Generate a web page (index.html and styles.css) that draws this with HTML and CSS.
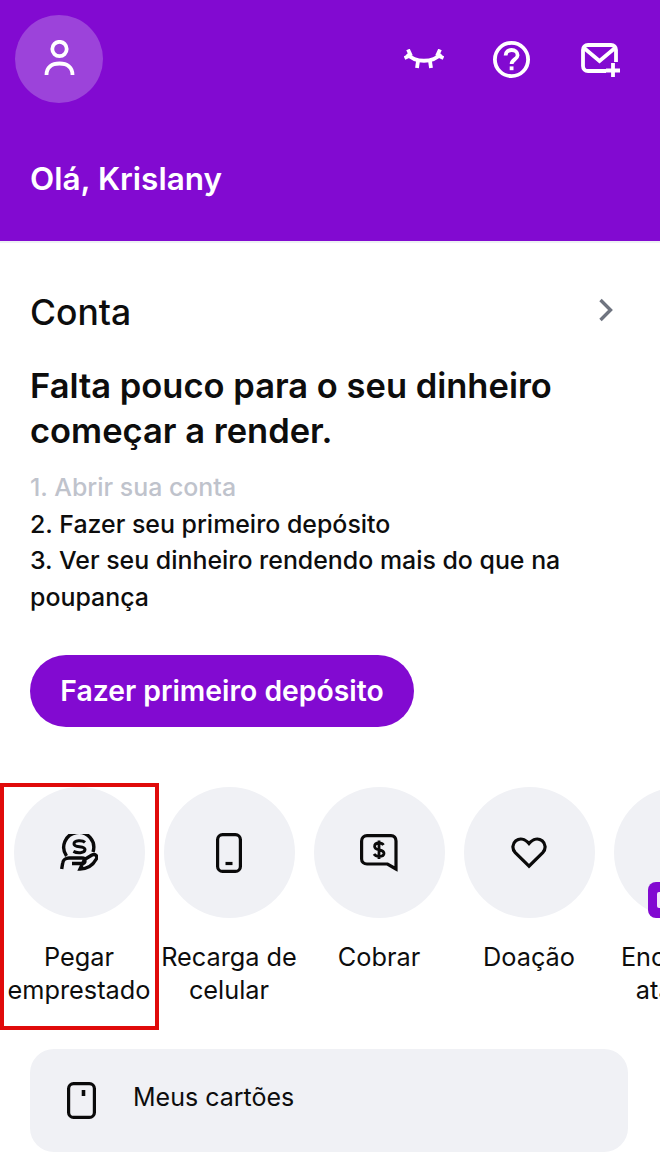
FILE: index.html
```html
<!DOCTYPE html>
<html lang="pt-BR">
    <head>
        <meta charset="UTF-8">
        <title>Conta</title>
        <link rel="stylesheet" href="styles.css">
    </head>
    <body>
        <header class="header">
            <div class="header-top">
                <div class="avatar">
                    <svg class="icon-person" width="31" height="36" viewBox="0 0 31 36" fill="none" stroke="#fff" stroke-width="3.8">
                        <circle cx="15.5" cy="9" r="7.2"/>
                        <path d="M2.5 35 C2.5 27 8 23.5 15.5 23.5 C23 23.5 28.5 27 28.5 35"/>
                    </svg>
                </div>
                <div class="header-icons">
                    <svg class="icon-eye" width="40" height="20" viewBox="0 0 40 20" fill="none" stroke="#fff" stroke-width="3.8">
                        <path d="M3 5 C11 14 29 14 37 5"/>
                        <path d="M4 0.5 L7 7"/>
                        <path d="M36 0.5 L33 7"/>
                        <path d="M0.5 9 L6 6.5"/>
                        <path d="M39.5 9 L34 6.5"/>
                        <path d="M14 12 L13 19"/>
                        <path d="M26 12 L27 19"/>
                    </svg>
                    <svg class="icon-help" width="37" height="37" viewBox="0 0 37 37" fill="none" stroke="#fff" stroke-width="3.8">
                        <circle cx="18.5" cy="18.5" r="16.6"/>
                        <path d="M12.6 14.6 C12.6 10.6 15.6 9 18.6 9 C22 9 24.6 11 24.6 14.2 C24.6 18.2 18.6 18.6 18.6 23"/>
                        <path d="M18.6 25.4 L18.6 29.2"/>
                    </svg>
                    <svg class="icon-mail" width="39" height="34" viewBox="0 0 39 34" fill="none" stroke="#fff" stroke-width="3.8">
                        <path d="M25 28 L7 28 C4 28 2 26 2 23 L2 7 C2 4 4 2 7 2 L30 2 C33 2 35 4 35 7 L35 19"/>
                        <path d="M3 5 L18.5 18 L34 5"/>
                        <path d="M32 20 L32 34 M25 27.5 L39 27.5"/>
                    </svg>
                </div>
            </div>
            <p class="greeting">Olá, Krislany</p>
        </header>
        <main class="account">
            <div class="account-title">
                <h1>Conta</h1>
                <svg width="16" height="24" viewBox="0 0 16 24" fill="none" stroke="#6f7480" stroke-width="3.4">
                    <path d="M2.5 2 L12.5 12 L2.5 22"/>
                </svg>
            </div>
            <h2 class="account-headline">Falta pouco para o seu dinheiro começar a render.</h2>
            <ol class="steps">
                <li class="step-done">1. Abrir sua conta</li>
                <li>2. Fazer seu primeiro depósito</li>
                <li>3. Ver seu dinheiro rendendo mais do que na poupança</li>
            </ol>
            <button class="deposit-button">Fazer primeiro depósito</button>
        </main>
        <section class="shortcuts">
            <div class="shortcut shortcut-marked">
                <div class="shortcut-circle">
                    <svg width="38" height="37" viewBox="0 0 38 37" fill="none" stroke="#0a0a0a" stroke-width="3.4">
                        <path d="M6.5 22 A15 15 0 1 1 33 18"/>
                        <path d="M25 8.4 C22.5 6 14 5.8 14 10 C14 14.2 25 11.4 25 15.6 C25 19.4 17 19.4 13.4 17.4" stroke-width="3"/>
                        <path d="M1.7 35 L2.7 29 C3 26 6 24 9 24 L22 24 C26 24 26 29.5 22 29.5 L12 29.5 M24.5 25.5 L32 21 C35 19.5 38 22 36.3 25 C33 31 27 35 20 35 Z"/>
                    </svg>
                </div>
                <span class="shortcut-label">Pegar emprestado</span>
            </div>
            <div class="shortcut">
                <div class="shortcut-circle">
                    <svg width="26" height="40" viewBox="0 0 26 40" fill="none" stroke="#0a0a0a" stroke-width="3.2">
                        <rect x="1.6" y="1.6" width="22.8" height="36.8" rx="5"/>
                        <path d="M9.5 30.5 L16.5 30.5"/>
                    </svg>
                </div>
                <span class="shortcut-label">Recarga de celular</span>
            </div>
            <div class="shortcut">
                <div class="shortcut-circle">
                    <svg width="38" height="38" viewBox="0 0 38 38" fill="none" stroke="#0a0a0a" stroke-width="3.2">
                        <path d="M36 35 L27.5 30 L7 30 C4 30 1.6 28 1.6 25 L1.6 7 C1.6 4 4 1.6 7 1.6 L31 1.6 C34 1.6 36 4 36 7 Z"/>
                        <path d="M23.5 11 C22.6 9.6 21 9 19 9 C16.4 9 14.6 10.2 14.6 12.4 C14.6 17 24 14.8 24 19.2 C24 21.4 22 22.4 19 22.4 C16.8 22.4 15 21.6 14 20 M19 6.4 L19 25" stroke-width="2.8"/>
                    </svg>
                </div>
                <span class="shortcut-label">Cobrar</span>
            </div>
            <div class="shortcut">
                <div class="shortcut-circle">
                    <svg width="36" height="32" viewBox="0 0 38 34" fill="none" stroke="#0a0a0a" stroke-width="3.4">
                        <path d="M19 31 L4.4 16.6 C0.6 12.6 1.4 7 5 4 C9 1 14.6 1.6 19 7 C23.4 1.6 29 1 33 4 C36.6 7 37.4 12.6 33.6 16.6 Z"/>
                    </svg>
                </div>
                <span class="shortcut-label">Doação</span>
            </div>
            <div class="shortcut">
                <div class="shortcut-circle"></div>
                <span class="shortcut-badge">
                    <span class="shortcut-badge-mark"></span>
                </span>
                <span class="shortcut-label">Encontrar atalhos</span>
            </div>
        </section>
        <section class="cards">
            <a class="cards-link">
                <svg width="29" height="37" viewBox="0 0 29 37" fill="none" stroke="#0a0a0a" stroke-width="3.2">
                    <rect x="1.6" y="1.6" width="25.8" height="33.8" rx="5"/>
                    <path d="M16.5 8 L16.5 14" stroke-width="3.6"/>
                </svg>
                <span class="cards-label">Meus cartões</span>
            </a>
        </section>
    </body>
</html>
```

FILE: styles.css
```css
*
{
    margin: 0;
    padding: 0;
    box-sizing: border-box;
}

body
{
    overflow: hidden;
    height: 1173px;

    background: #fff;
    color: #0d0d0d;
    font-family: "Inter", "Liberation Sans", sans-serif;
}

.header
{
    height: 243px;
    padding: 15px 0 0 15px;

    background: #820ad1;
    background-clip: padding-box;
    border-bottom: 2px solid #eef1f4;
}

.header-top
{
    display: flex;
    justify-content: space-between;
    align-items: flex-start;
}

.avatar
{
    display: flex;
    justify-content: center;
    align-items: center;
    height: 88px;
    width: 88px;

    background: #9c43da;
    border-radius: 50%;
}

.icon-person
{
    margin-top: -2px;
}

.header-icons
{
    display: flex;
    align-items: center;
    height: 88px;
    padding-right: 40px;
}

.icon-help
{
    margin-left: 49px;
}

.icon-mail
{
    margin: 2px 0 0 51px;
}

.greeting
{
    margin: 57px 0 0 15px;

    color: #fff;
    font-size: 31.5px;
    font-weight: 600;
    line-height: 38px;
}

.account
{
    padding: 49px 44px 0 30px;
}

.account-title
{
    display: flex;
    justify-content: space-between;
    align-items: center;
    padding-right: 2px;
}

.account-title svg
{
    margin-top: -6px;
}

.account-title h1
{
    font-size: 35.5px;
    font-weight: 500;
    line-height: 42px;
}

.account-headline
{
    margin-top: 29px;

    font-size: 34.5px;
    font-weight: 600;
    line-height: 45px;
}

.steps
{
    margin-top: 16px;

    font-size: 24.9px;
    font-weight: 500;
    line-height: 36.6px;
    list-style: none;
}

.step-done
{
    color: #bfc3cc;
}

.deposit-button
{
    height: 72px;
    width: 384px;
    margin-top: 40px;

    background: #820ad1;
    border: 0;
    border-radius: 36px;
    color: #fff;
    font-family: inherit;
    font-size: 28.3px;
    font-weight: 600;
}

.shortcuts
{
    display: flex;
    margin-top: 60px;
    padding-left: 4px;
}

.shortcut
{
    position: relative;

    display: flex;
    flex: 0 0 150px;
    flex-direction: column;
    align-items: center;
}

.shortcut-marked::after
{
    content: "";
    position: absolute;
    top: -4px;
    left: -4px;

    box-sizing: border-box;
    height: 247px;
    width: 159px;

    border: 4px solid #e00a0a;
}

.shortcut-circle
{
    display: flex;
    justify-content: center;
    align-items: center;
    height: 131px;
    width: 131px;

    background: #f0f1f5;
    border-radius: 50%;
}

.shortcut-badge
{
    position: absolute;
    top: 95px;
    left: 44px;

    height: 36px;
    width: 40px;
    padding: 10px 0 0 9px;

    background: #820ad1;
    border-radius: 8px;
}

.shortcut-badge-mark
{
    display: block;
    height: 16px;
    width: 20px;

    background: #f3e6fb;
    border-radius: 2px;
}

.shortcut-label
{
    margin-top: 22px;

    font-size: 25.3px;
    line-height: 33px;
    text-align: center;
}

.cards
{
    margin-top: 43px;
    padding: 0 32px 0 30px;
}

.cards-link
{
    display: flex;
    align-items: center;
    gap: 37px;
    height: 103px;
    padding-left: 37px;

    background: #f0f1f5;
    border-radius: 24px;
    font-size: 25px;
}

.cards-label
{
    margin-top: -7px;
}
```
